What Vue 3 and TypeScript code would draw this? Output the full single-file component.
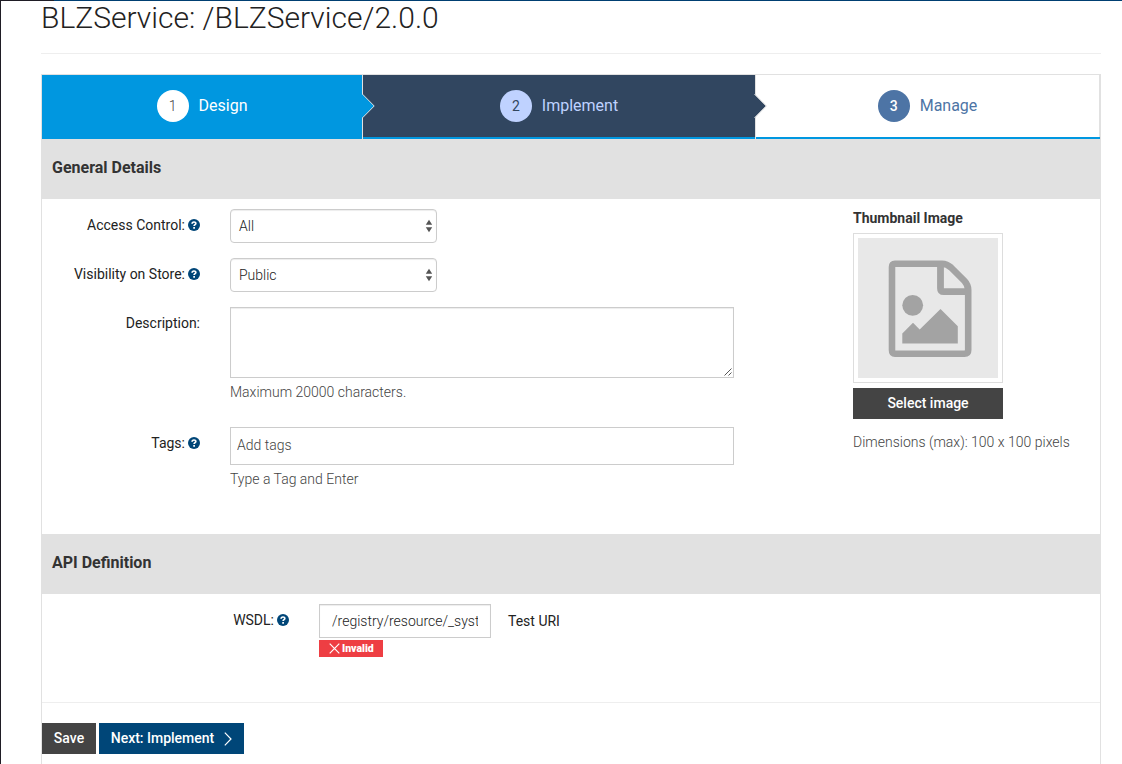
<script setup lang="ts">
import { ref } from 'vue'

interface Step {
  number: number
  label: string
  state: 'active' | 'next' | 'later'
}

const steps: Step[] = [
  { number: 1, label: 'Design', state: 'active' },
  { number: 2, label: 'Implement', state: 'next' },
  { number: 3, label: 'Manage', state: 'later' },
]

const access = ref('All')
const visibility = ref('Public')
const description = ref('')
const tags = ref('')
const wsdl = ref('/registry/resource/_system/governance/apimgt/applicationdata/wsdls')
</script>

<template>
  <div class="page">
    <h1 class="title">BLZService: /BLZService/2.0.0</h1>

    <main class="panel">
      <nav class="steps">
        <a v-for="step in steps" :key="step.number" class="step" :class="step.state">
          <span class="bubble">{{ step.number }}</span>
          <span class="step-label">{{ step.label }}</span>
          <svg v-if="step.state !== 'later'" class="arrow" width="14" height="26" viewBox="0 0 14 26">
            <path class="arrow-fill" d="M0 1.5H1L12.3 13L1 24.5H0Z" />
            <path class="arrow-line" d="M.5 1.2L12.2 13L.5 24.8" />
          </svg>
        </a>
      </nav>

      <h2 class="section-head">General Details</h2>
      <section class="general">
        <div class="fields">
          <div class="row select-row">
            <label class="label"><span>Access Control:</span>
              <svg class="help" viewBox="0 0 12 12"><circle cx="6" cy="6" r="6" /><path d="M4.1 4.7C4.2 2.4 7.9 2.5 7.8 4.5C7.8 5.7 6.1 5.7 6.1 7.1" /><path d="M6.1 8.1V9.7" /></svg>
            </label>
            <div class="select">
              <span>{{ access }}</span>
              <svg width="8" height="14" viewBox="0 0 8 14"><path d="M4 .8L7.2 5.8H.8ZM.8 8.2H7.2L4 13.2Z" /></svg>
            </div>
          </div>
          <div class="row select-row">
            <label class="label"><span>Visibility on Store:</span>
              <svg class="help" viewBox="0 0 12 12"><circle cx="6" cy="6" r="6" /><path d="M4.1 4.7C4.2 2.4 7.9 2.5 7.8 4.5C7.8 5.7 6.1 5.7 6.1 7.1" /><path d="M6.1 8.1V9.7" /></svg>
            </label>
            <div class="select">
              <span>{{ visibility }}</span>
              <svg width="8" height="14" viewBox="0 0 8 14"><path d="M4 .8L7.2 5.8H.8ZM.8 8.2H7.2L4 13.2Z" /></svg>
            </div>
          </div>
          <div class="row description-row">
            <label class="label"><span>Description:</span></label>
            <div class="control">
              <div class="area-wrap">
                <textarea v-model="description" class="area"></textarea>
                <svg class="grip" width="8" height="8" viewBox="0 0 8 8"><path d="M.5 7.5L7.5 .5M4.5 7.5L7.5 4.5" /></svg>
              </div>
              <p class="hint">Maximum 20000 characters.</p>
            </div>
          </div>
          <div class="row">
            <label class="label"><span>Tags:</span>
              <svg class="help" viewBox="0 0 12 12"><circle cx="6" cy="6" r="6" /><path d="M4.1 4.7C4.2 2.4 7.9 2.5 7.8 4.5C7.8 5.7 6.1 5.7 6.1 7.1" /><path d="M6.1 8.1V9.7" /></svg>
            </label>
            <div class="control">
              <input v-model="tags" class="tags" placeholder="Add tags" />
              <p class="hint">Type a Tag and Enter</p>
            </div>
          </div>
        </div>

        <aside class="thumb">
          <h3 class="thumb-title">Thumbnail Image</h3>
          <div class="frame">
            <svg width="140" height="140" viewBox="0 0 140 140">
              <rect width="140" height="140" fill="#e8e8e8" />
              <path d="M37 25.7H84Q89 25.7 93 29.5L106.5 43Q110.2 47 110.2 52V112Q110.2 115.7 106.5 115.7H37Q34 115.7 34 112V29Q34 25.7 37 25.7Z" fill="none" stroke="#a3a3a3" stroke-width="6.6" />
              <path d="M82.5 27V50.5Q82.5 53.7 85.7 53.7H110" fill="none" stroke="#a3a3a3" stroke-width="6.8" />
              <circle cx="54.7" cy="67.3" r="10.4" fill="#a3a3a3" />
              <path d="M44.3 105.5V95.5L55 84.8L61.7 91.5L82.5 71L99.8 88.2V105.5Z" fill="#a3a3a3" />
            </svg>
          </div>
          <button class="btn select-image">Select image</button>
          <p class="dimensions">Dimensions (max): 100 x 100 pixels</p>
        </aside>
      </section>

      <h2 class="section-head">API Definition</h2>
      <section class="api">
        <label class="label wsdl-label"><span>WSDL:</span>
          <svg class="help" viewBox="0 0 12 12"><circle cx="6" cy="6" r="6" /><path d="M4.1 4.7C4.2 2.4 7.9 2.5 7.8 4.5C7.8 5.7 6.1 5.7 6.1 7.1" /><path d="M6.1 8.1V9.7" /></svg>
        </label>
        <div class="wsdl-field">
          <input v-model="wsdl" class="wsdl" />
          <div class="invalid">
            <svg width="11" height="11" viewBox="0 0 11 11"><path d="M.7 .7L10.3 10.3M10.3 .7L.7 10.3" /></svg>
            <span>Invalid</span>
          </div>
        </div>
        <a class="test">Test URI</a>
      </section>

      <footer class="actions">
        <button class="btn save">Save</button>
        <button class="btn next-btn">
          <span>Next: Implement</span>
          <svg width="8" height="14" viewBox="0 0 8 14"><path d="M.8 .6L7 7L.8 13.4" /></svg>
        </button>
      </footer>
    </main>
  </div>
</template>

<style>
body {
  background: #fff;
  overflow: hidden;
}
</style>

<style scoped>
* {
  box-sizing: border-box;
}
.page {
  height: 764px;
  padding: 0 21px 0 40px;
  border-left: 1px solid #1f1d25;
  overflow: hidden;
  font: 300 14px/20px Roboto, "Liberation Sans", sans-serif;
  color: #333;
  background: linear-gradient(90deg, #1f1d25 53px, #003f72 53px) top / 100% 1px no-repeat;
}
.title {
  height: 54px;
  margin: 0 0 20px;
  padding-top: 1px;
  border-bottom: 1px solid #eee;
  color: #222;
  font-size: 30px;
  font-weight: 300;
  line-height: 33px;
  white-space: nowrap;
}
.panel {
  height: 700px;
  border: 1px solid #e1e1e1;
}
.steps {
  display: grid;
  grid-template-columns: 321px 393px 1fr;
  height: 64px;
}
.step {
  position: relative;
  display: flex;
  justify-content: center;
  gap: 10px;
  padding-top: 15px;
  border-right: 1px solid #e1e1e1;
  font-size: 16px;
  font-weight: 400;
  line-height: 32px;
}
.step::after {
  content: "";
  position: absolute;
  inset: auto 0 0;
  height: 2px;
  background: #0097e0;
}
.bubble {
  width: 32px;
  height: 32px;
  border-radius: 50%;
  font-size: 14px;
  text-align: center;
}
.step-label {
  line-height: 31px;
}
.active {
  color: #fff;
  background: #0097e0;
}
.active .bubble {
  color: #444;
  background: #fff;
  font-weight: 300;
}
.next {
  color: #bfd2ff;
  background: #314660;
}
.next .bubble {
  color: #314660;
  background: #bfd2ff;
}
.later {
  color: #4d74a5;
}
.later::after {
  right: -1px;
}
.later .bubble {
  color: #fff;
  background: #4d74a5;
  font-weight: 500;
}
.arrow {
  position: absolute;
  z-index: 1;
  top: 18px;
  right: -14px;
}
.next .arrow {
  right: -13px;
}
.arrow-line {
  fill: none;
  stroke: #e1e1e1;
}
.active .arrow-fill {
  fill: #0097e0;
}
.next .arrow-fill {
  fill: #314660;
}
.section-head {
  height: 60px;
  margin: 0;
  padding: 19px 10px;
  background: #e1e1e1;
  font-size: 16px;
  font-weight: 700;
  line-height: 20px;
}
.general {
  display: flex;
  height: 335px;
  padding-top: 10px;
}
.fields {
  width: 811px;
}
.row {
  display: flex;
  gap: 30px;
}
.select-row {
  height: 49px;
}
.description-row {
  height: 120px;
}
.label {
  display: flex;
  justify-content: flex-end;
  gap: 3px;
  width: 158px;
  height: 20px;
  margin-top: 6px;
  color: #222;
  font-weight: 400;
  white-space: nowrap;
}
.help {
  width: 12px;
  height: 12px;
  margin-top: 4.4px;
}
.help circle {
  fill: #004678;
}
.help path {
  fill: none;
  stroke: #fff;
  stroke-width: 1.7;
}
.select {
  display: flex;
  align-items: center;
  justify-content: space-between;
  width: 207px;
  height: 34px;
  padding: 0 3px 0 8px;
  border: 1px solid #ccc;
  border-radius: 4px;
  box-shadow: inset 0 1px 1px rgba(0, 0, 0, 0.075);
  color: #222;
}
.select svg {
  fill: #555;
}
.area-wrap {
  position: relative;
  height: 71px;
}
.area {
  display: block;
  width: 504px;
  height: 71px;
  border: 1px solid #ccc;
  box-shadow: inset 0 1px 1px rgba(0, 0, 0, 0.075);
  outline: 0;
  resize: none;
}
.grip {
  position: absolute;
  right: 2px;
  bottom: 2px;
  fill: none;
  stroke: #444;
  stroke-width: 0.9;
}
.hint {
  margin: 4px 0 0;
  color: #444;
}
.tags {
  display: block;
  width: 504px;
  height: 38px;
  padding: 0 6px 2px;
  border: 1px solid #ccc;
  outline: 0;
  font: inherit;
}
.tags::placeholder {
  color: #444;
  opacity: 1;
}
.thumb {
  width: 240px;
}
.thumb-title {
  margin: -1px 0 5px;
  font-size: 14px;
  font-weight: 700;
  line-height: 20px;
}
.frame {
  width: 150px;
  height: 150px;
  padding: 4px;
  border: 1px solid #ddd;
}
.frame svg {
  display: block;
}
.btn {
  display: flex;
  align-items: center;
  justify-content: center;
  height: 31px;
  padding: 0 0 1px;
  border: 0;
  background: #444;
  color: #fff;
  font: 500 14px/20px Roboto, "Liberation Sans", sans-serif;
}
.select-image {
  width: 150px;
  margin-top: 5px;
}
.dimensions {
  margin: 13px 0 0;
  color: #444;
  white-space: nowrap;
}
.api {
  display: flex;
  height: 108px;
  padding-top: 10px;
}
.wsdl-label {
  width: 247px;
}
.wsdl-field {
  width: 172px;
  margin-left: 30px;
}
.wsdl {
  display: block;
  width: 172px;
  height: 34px;
  padding: 0 12px;
  border: 1px solid #ccc;
  box-shadow: inset 0 1px 1px rgba(0, 0, 0, 0.075);
  outline: 0;
  color: #222;
  font: inherit;
}
.invalid {
  display: flex;
  align-items: center;
  gap: 2px;
  width: 64px;
  height: 17px;
  margin-top: 2px;
  padding-left: 10px;
  background: #ee3e43;
  color: #fff;
  font-size: 10.5px;
  font-weight: 900;
  line-height: 17px;
}
.invalid svg,
.next-btn svg {
  fill: none;
  stroke: #fff;
  stroke-width: 1.2;
}
.next-btn svg {
  margin-top: 1px;
}
.test {
  margin: 7px 0 0 17px;
  color: #222;
  font-weight: 400;
}
.actions {
  display: flex;
  gap: 3px;
  padding-top: 20px;
  border-top: 1px solid #eee;
}
.save {
  width: 54px;
}
.next-btn {
  gap: 10px;
  width: 145px;
  background: #004678;
}
</style>
